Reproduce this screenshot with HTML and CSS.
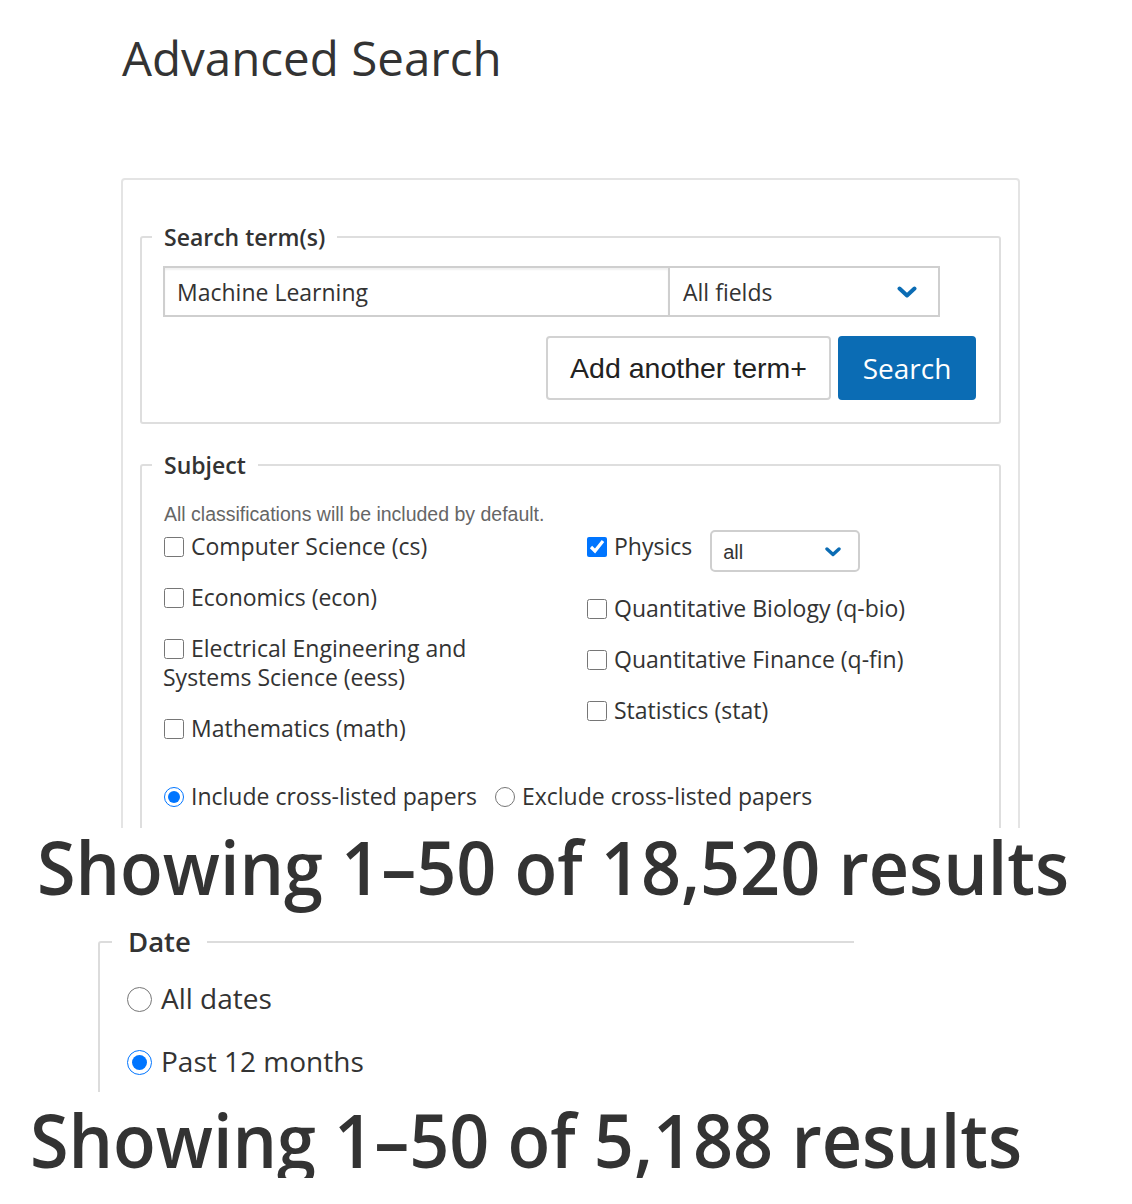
FILE: index.html
```html
<!DOCTYPE html>
<html lang="en">
<head>
<meta charset="utf-8">
<title>Advanced Search</title>
<link rel="stylesheet" href="styles.css">
</head>
<body>
<div class="shot">
  <h1 class="title">Advanced Search</h1>
  <div class="panel">
    <fieldset class="box">
      <legend class="legend">Search term(s)</legend>
      <div class="box-body">
        <div class="term-row">
          <input class="term-input" type="text" value="Machine Learning">
          <div class="field-select">
            <span>All fields</span>
            <svg class="chev" width="20" height="12" viewBox="0 0 20 12"><polyline points="2.5,2.5 10,9.5 17.5,2.5" fill="none" stroke="#0b6cb4" stroke-width="4" stroke-linecap="round" stroke-linejoin="round"/></svg>
          </div>
        </div>
        <div class="btn-row">
          <button class="btn btn-light" type="button">Add another term+</button>
          <button class="btn btn-primary" type="button">Search</button>
        </div>
      </div>
    </fieldset>
    <fieldset class="box box-subject">
      <legend class="legend">Subject</legend>
      <div class="box-body">
        <p class="hint">All classifications will be included by default.</p>
        <div class="cols">
          <div class="col col-left">
            <label class="chk"><input type="checkbox">Computer Science (cs)</label>
            <label class="chk"><input type="checkbox">Economics (econ)</label>
            <label class="chk"><input type="checkbox">Electrical Engineering and Systems Science (eess)</label>
            <label class="chk"><input type="checkbox">Mathematics (math)</label>
          </div>
          <div class="col">
            <div class="phys">
              <label class="chk"><input type="checkbox" checked>Physics</label>
              <div class="mini-select">
                <span>all</span>
                <svg width="16" height="10" viewBox="0 0 16 10"><polyline points="2,2 8,7.5 14,2" fill="none" stroke="#0b6cb4" stroke-width="3.4" stroke-linecap="round" stroke-linejoin="round"/></svg>
              </div>
            </div>
            <label class="chk"><input type="checkbox">Quantitative Biology (q-bio)</label>
            <label class="chk"><input type="checkbox">Quantitative Finance (q-fin)</label>
            <label class="chk"><input type="checkbox">Statistics (stat)</label>
          </div>
        </div>
        <div class="cross">
          <label class="chk"><input type="radio" name="cross" checked>Include cross-listed papers</label>
          <label class="chk"><input type="radio" name="cross">Exclude cross-listed papers</label>
        </div>
      </div>
    </fieldset>
  </div>
</div>

<h2 class="results results-first">Showing 1–50 of 18,520 results</h2>

<div class="date-crop">
  <fieldset class="date-box">
    <legend class="date-legend">Date</legend>
    <div class="date-body">
      <label class="date-opt"><input type="radio" name="date">All dates</label>
      <label class="date-opt"><input type="radio" name="date" checked>Past 12 months</label>
    </div>
  </fieldset>
</div>

<h2 class="results results-second">Showing 1–50 of 5,188 results</h2>
</body>
</html>
```

FILE: styles.css
```css
* { box-sizing: border-box; }

html, body {
  margin: 0;
  padding: 0;
  background: #fff;
}

body {
  font-family: "Open Sans", "Noto Sans", sans-serif;
  color: #333;
  width: 1132px;
  overflow: hidden;
}

.shot {
  height: 828px;
  overflow: hidden;
}

.title {
  margin: 30px 0 0 122px;
  font-size: 47.5px;
  line-height: 56px;
  font-weight: 400;
  color: #333;
}

.panel {
  margin: 92px 0 0 121px;
  width: 899px;
  height: 800px;
  border: 2px solid #e4e4e4;
  border-radius: 4px;
  padding: 42px 17px 0 17px;
}

.box {
  margin: 0;
  border: 2px solid #dedede;
  border-radius: 3px;
  padding: 0 23px 22px 10px;
  min-width: 0;
}

.legend {
  padding: 0 12px;
  font-size: 23px;
  line-height: 30px;
  font-weight: 600;
  color: #333;
}

.box-body {
  padding-left: 11px;
}

.term-row {
  display: flex;
  margin-top: 14px;
  height: 51px;
  width: 777px;
}

.term-input {
  width: 507px;
  height: 51px;
  border: 2px solid #cfcfcf;
  box-shadow: inset 0 2px 2px rgba(0, 0, 0, 0.06);
  padding: 0 12px;
  font-family: "Open Sans", sans-serif;
  font-size: 23px;
  color: #333;
  outline: none;
}

.field-select {
  flex: 1;
  display: flex;
  align-items: center;
  justify-content: space-between;
  border: 2px solid #cfcfcf;
  border-left: none;
  padding: 0 21px 0 13px;
  font-size: 23px;
}

.btn-row {
  display: flex;
  justify-content: flex-end;
  gap: 7px;
  margin-top: 19px;
}

.btn {
  height: 64px;
  border-radius: 4px;
  padding: 0;
  cursor: pointer;
}

.btn-light {
  width: 285px;
  background: #fff;
  border: 2px solid #d2d2d2;
  color: #222;
  font-family: "Liberation Sans", Arial, sans-serif;
  font-size: 28.5px;
}

.btn-primary {
  width: 138px;
  background: #0b6cb4;
  border: 2px solid #0b6cb4;
  color: #fff;
  font-family: "Open Sans", sans-serif;
  font-size: 28px;
}

.box-subject {
  margin-top: 26px;
  min-height: 600px;
}

.hint {
  margin: 23px 0 0 1px;
  font-family: "Liberation Sans", Arial, sans-serif;
  font-size: 19.5px;
  line-height: 22px;
  color: #666;
}

.cols {
  display: grid;
  grid-template-columns: 423px 1fr;
  margin-top: 7px;
}

.col {
  display: flex;
  flex-direction: column;
  gap: 22px;
}

.col-left {
  width: 390px;
}

.chk {
  font-size: 23px;
  line-height: 29px;
  color: #333;
}

.chk input {
  width: 20px;
  height: 20px;
  margin: 0 7px 0 1px;
  vertical-align: -2px;
}

.phys {
  display: flex;
  align-items: flex-start;
  margin-top: -2px;
}

.phys .chk {
  margin-top: 2px;
}

.mini-select {
  margin-left: 18px;
  width: 150px;
  height: 42px;
  border: 2px solid #cfcfcf;
  border-radius: 5px;
  display: flex;
  align-items: center;
  justify-content: space-between;
  padding: 2px 17px 0 11px;
  font-family: "Liberation Sans", Arial, sans-serif;
  font-size: 20px;
  color: #333;
}

.cross {
  display: flex;
  gap: 17px;
  margin-top: 39px;
}

.results {
  margin: 0;
  font-size: 74px;
  line-height: 77px;
  font-weight: 600;
  color: #333;
  white-space: nowrap;
  transform: scaleX(0.947);
  transform-origin: left center;
}

.results-first {
  margin-left: 37px;
}

.results-second {
  margin: 9px 0 0 30px;
}

.date-crop {
  margin: 19px 0 0 98px;
  width: 756px;
  height: 168px;
  overflow: hidden;
}

.date-box {
  margin: 0;
  width: 1000px;
  height: 400px;
  border: 2px solid #dcdcdc;
  border-radius: 3px;
  padding: 0 0 0 12px;
}

.date-legend {
  padding: 0 16px;
  font-size: 27.5px;
  line-height: 36px;
  font-weight: 600;
  color: #333;
}

.date-body {
  margin: 19px 0 0 15px;
  display: flex;
  flex-direction: column;
  gap: 25px;
}

.date-opt {
  font-size: 28px;
  line-height: 38px;
  color: #333;
}

.date-opt input {
  width: 25px;
  height: 25px;
  margin: 0 9px 0 0;
  vertical-align: -3px;
}
```
